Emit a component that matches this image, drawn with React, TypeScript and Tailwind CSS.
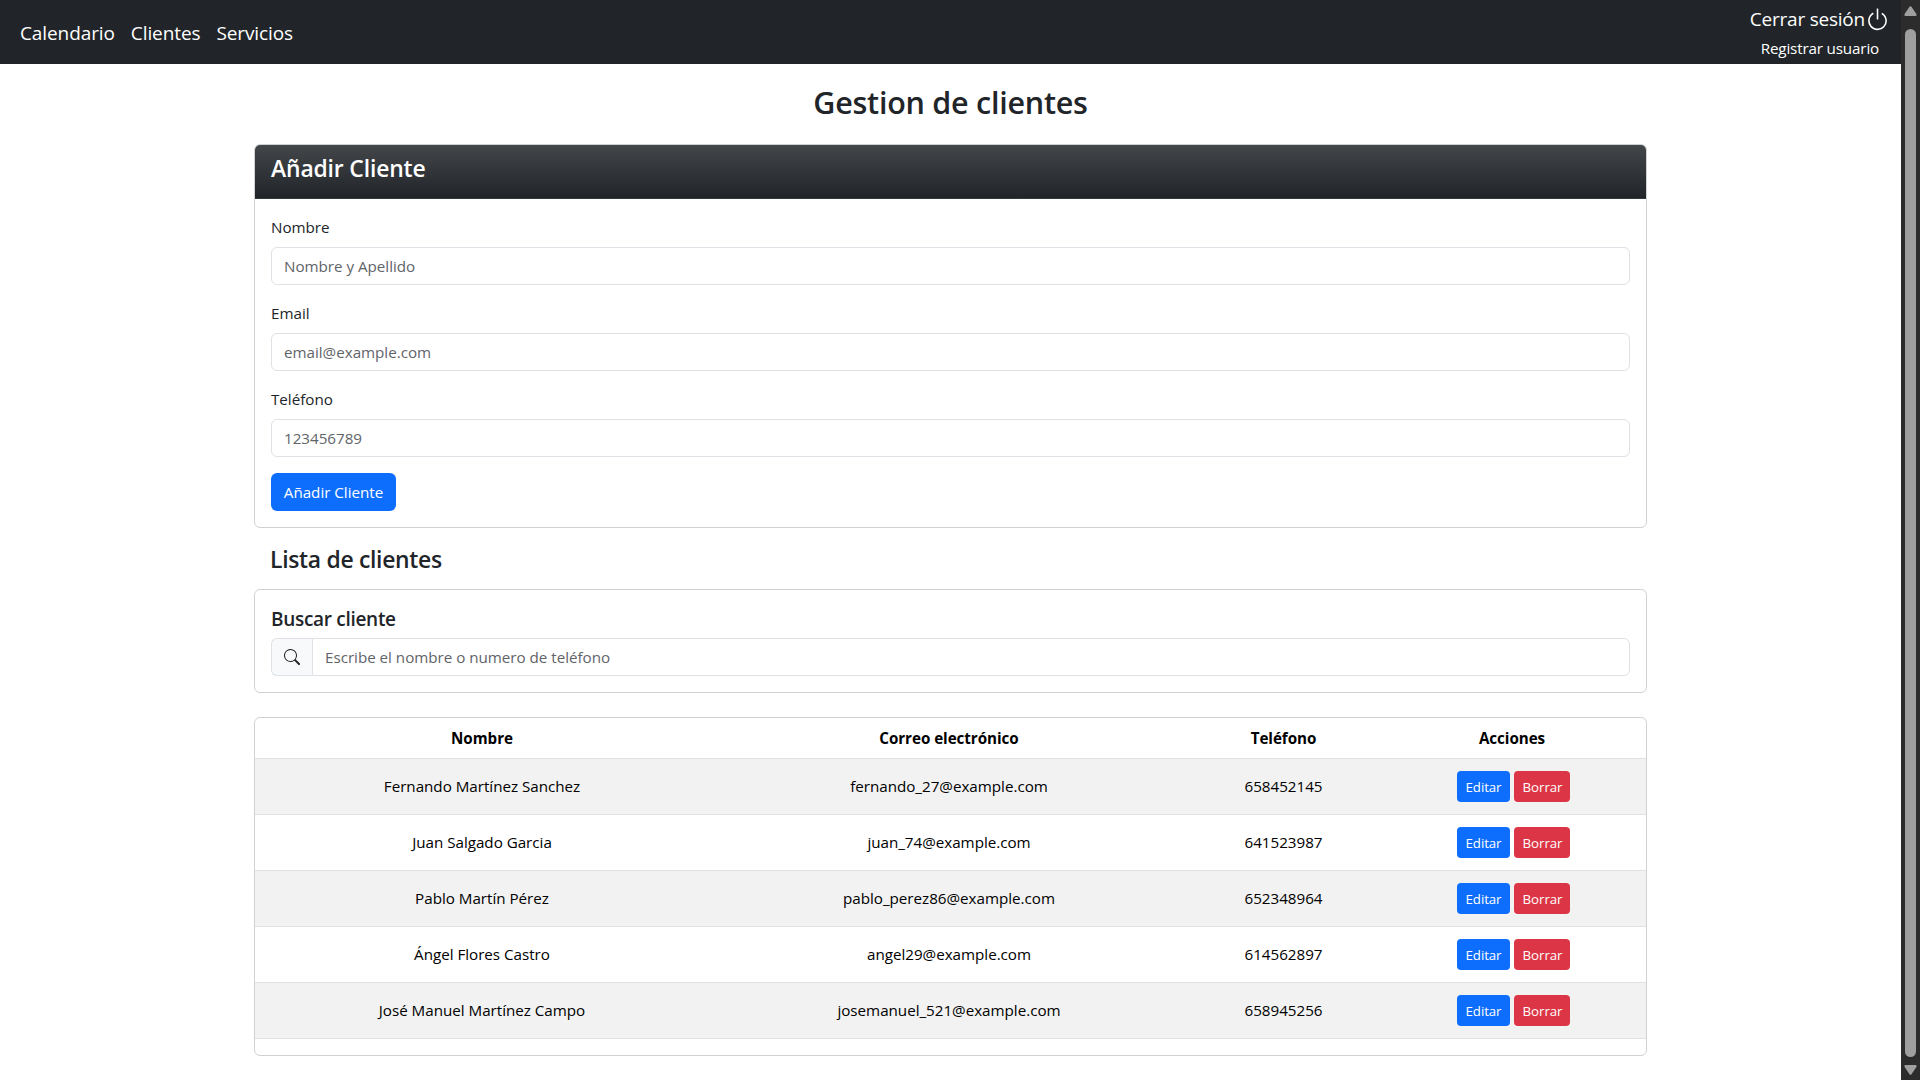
import { BsPower, BsSearch } from "react-icons/bs";

const clients = [
  { name: "Fernando Martínez Sanchez", email: "fernando_27@example.com", phone: "658452145" },
  { name: "Juan Salgado Garcia", email: "juan_74@example.com", phone: "641523987" },
  { name: "Pablo Martín Pérez", email: "pablo_perez86@example.com", phone: "652348964" },
  { name: "Ángel Flores Castro", email: "angel29@example.com", phone: "614562897" },
  { name: "José Manuel Martínez Campo", email: "josemanuel_521@example.com", phone: "658945256" },
];

const fields = [
  { label: "Nombre", placeholder: "Nombre y Apellido" },
  { label: "Email", placeholder: "email@example.com" },
  { label: "Teléfono", placeholder: "123456789" },
];

const inputClass =
  "block h-[38px] w-full border border-[#dee2e6] bg-white px-3 text-[15.2px] tracking-[-0.02px] text-[#212529] placeholder:text-[#5f6469] placeholder:opacity-100 outline-none";

function Navbar() {
  return (
    <nav className="flex h-16 items-start justify-between bg-[#212529] pl-5 pr-[11px] text-white">
      <div className="flex gap-4 pt-[18px] text-[19px] leading-[30px] tracking-[-0.1px]">
        <a>Calendario</a>
        <a>Clientes</a>
        <a>Servicios</a>
      </div>
      <div className="flex flex-col items-center">
        <a className="flex h-[38px] items-center text-[19px] leading-[30px] tracking-[-0.22px]">
          Cerrar sesión
          <BsPower size={25} />
        </a>
        <a className="-mt-px text-[15.2px] leading-[22px] tracking-[-0.15px]">Registrar usuario</a>
      </div>
    </nav>
  );
}

function AddClientCard() {
  return (
    <section className="rounded-md border border-[#d0d1d2] bg-white">
      <div className="h-[54px] rounded-t-[5px] border-b border-[#34383b] bg-linear-to-b from-[#43474a] to-[#212529] px-4 pt-[9px]">
        <h4 className="text-[22.9px] font-semibold leading-[29px] tracking-[-0.15px] text-white">Añadir Cliente</h4>
      </div>
      <form className="p-4">
        {fields.map((f) => (
          <div key={f.label} className="mb-4">
            <label className="mb-2 block leading-6">{f.label}</label>
            <input className={`${inputClass} rounded-md`} placeholder={f.placeholder} />
          </div>
        ))}
        <button type="button" className="block h-[38px] w-[125px] whitespace-nowrap rounded-md bg-[#0d6efd] text-white">
          Añadir Cliente
        </button>
      </form>
    </section>
  );
}

function SearchCard() {
  return (
    <section className="rounded-md border border-[#d0d1d2] bg-white p-4">
      <h5 className="mb-[7px] pt-px text-[19px] font-semibold leading-6 tracking-[-0.3px]">Buscar cliente</h5>
      <div className="flex">
        <span className="flex h-[38px] w-[41px] shrink-0 items-center rounded-l-md border border-r-0 border-[#dee2e6] bg-[#f8f9fa] pl-3">
          <BsSearch size={16} />
        </span>
        <input className={`${inputClass} rounded-r-md`} placeholder="Escribe el nombre o numero de teléfono" />
      </div>
    </section>
  );
}

function ClientTable() {
  return (
    <section className="rounded-md border border-[#d0d1d2] bg-white pb-4">
      <table className="w-full table-fixed border-separate border-spacing-0 text-center text-black">
        <colgroup>
          <col className="w-[454px]" />
          <col className="w-[480px]" />
          <col className="w-[189px]" />
          <col />
        </colgroup>
        <thead>
          <tr className="h-[41px] font-bold tracking-[-0.05px]">
            <th className="border-b border-[#dee2e6]">Nombre</th>
            <th className="border-b border-[#dee2e6]">Correo electrónico</th>
            <th className="border-b border-[#dee2e6]">Teléfono</th>
            <th className="border-b border-[#dee2e6]">Acciones</th>
          </tr>
        </thead>
        <tbody>
          {clients.map((c) => (
            <tr key={c.name} className="h-14 odd:bg-[#f2f2f2]">
              <td className="border-b border-[#dee2e6]">{c.name}</td>
              <td className="border-b border-[#dee2e6]">{c.email}</td>
              <td className="border-b border-[#dee2e6]">{c.phone}</td>
              <td className="border-b border-[#dee2e6]">
                <div className="flex justify-center gap-1 pl-[2px] text-[13.3px] tracking-[-0.08px] text-white">
                  <button className="h-[31px] w-[53px] rounded-sm bg-[#0d6efd] pl-px pt-0.5">Editar</button>
                  <button className="h-[31px] w-14 rounded-sm bg-[#dc3545] pl-0.5 pt-0.5">Borrar</button>
                </div>
              </td>
            </tr>
          ))}
        </tbody>
      </table>
    </section>
  );
}

function Scrollbar() {
  return (
    <div className="flex w-[19px] shrink-0 flex-col items-center bg-[#2c2c2c] pt-[6px] pb-[5px]">
      <svg width="13" height="10" viewBox="0 0 13 10" fill="#9f9f9f" className="shrink-0">
        <path d="M5.5 .8Q6.5-.4 7.5 .8L12.4 8Q13 9.8 11.6 10H1.4Q0 9.8.6 8Z" />
      </svg>
      <div className="mt-[13px] mb-2 w-[11px] grow rounded-full bg-[#9f9f9f]" />
      <svg width="13" height="10" viewBox="0 0 13 10" fill="#9f9f9f" className="shrink-0">
        <path d="M5.5 9.2Q6.5 10.4 7.5 9.2L12.4 2Q13 .2 11.6 0H1.4Q0 .2.6 2Z" />
      </svg>
    </div>
  );
}

export default function App() {
  return (
    <div className="flex h-[1080px] w-[1920px] overflow-hidden bg-white font-['Open_Sans','Noto_Sans',sans-serif] text-[15.2px] tracking-[-0.02px] text-[#212529]">
      <div className="min-w-0 grow">
        <Navbar />
        <main className="mx-auto w-[1393px]">
          <h2 className="h-20 pt-[19px] text-center text-[30.5px] font-semibold leading-[38px] tracking-[-0.25px]">
            Gestion de clientes
          </h2>
          <AddClientCard />
          <h4 className="h-[61px] pl-4 pt-[17px] text-[22.9px] font-semibold leading-[29px] tracking-[-0.3px]">
            Lista de clientes
          </h4>
          <SearchCard />
          <div className="h-6" />
          <ClientTable />
        </main>
      </div>
      <Scrollbar />
    </div>
  );
}
